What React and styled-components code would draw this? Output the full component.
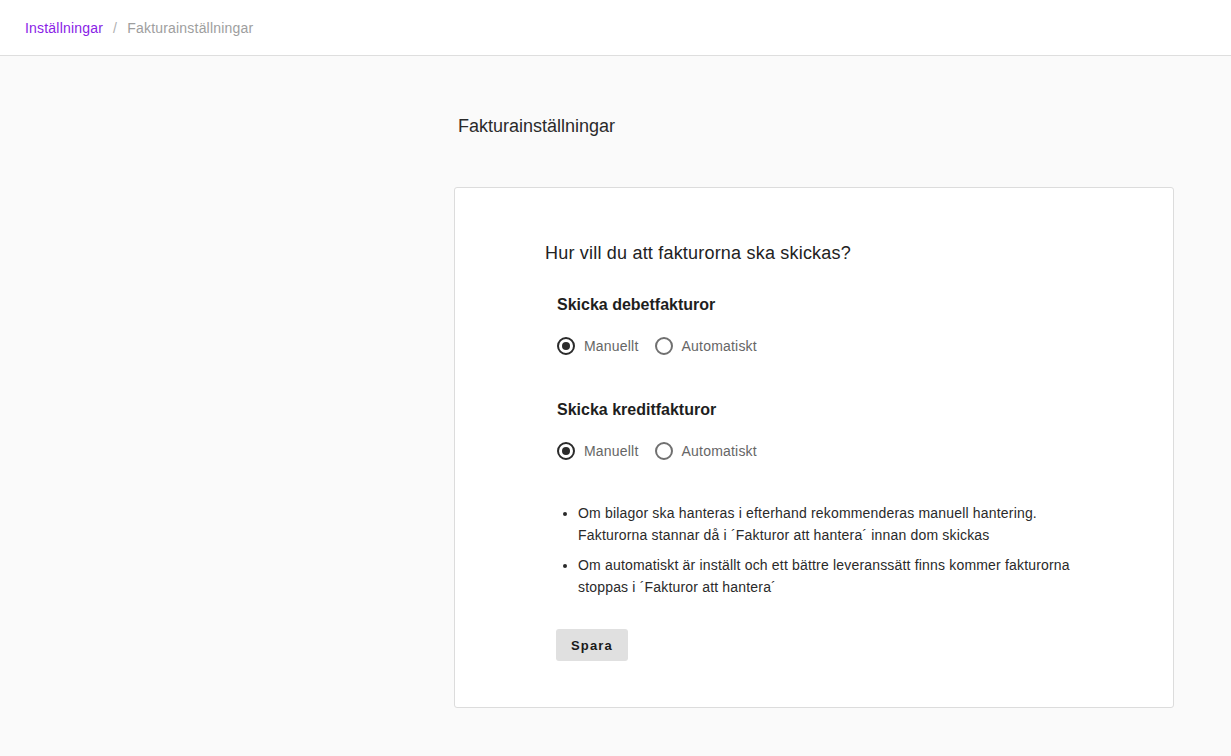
import React, { useState } from "react";
import styled, { createGlobalStyle } from "styled-components";

const GlobalStyle = createGlobalStyle`
  body {
    margin: 0;
    background: #fafafa;
    font-family: "Liberation Sans", Arial, sans-serif;
    color: #222;
  }
`;

const Header = styled.header`
  height: 55px;
  background: #fff;
  border-bottom: 1px solid #dedede;
  display: flex;
  align-items: center;
  padding: 0 25px;
  box-sizing: content-box;
  font-size: 14px;
  letter-spacing: 0.2px;
  gap: 10px;
`;

const Crumb = styled.a`
  color: ${props => (props.active ? "#8a22e6" : "#9e9e9e")};
  text-decoration: none;
  cursor: ${props => (props.active ? "pointer" : "default")};
`;

const Sep = styled.span`
  color: #b0b0b0;
`;

const Main = styled.main`
  display: grid;
  grid-template-columns: 454px 720px;
  padding-top: 59px;
  padding-bottom: 47px;
`;

const Column = styled.div`
  grid-column: 2;
  display: flex;
  flex-direction: column;
`;

const PageTitle = styled.h1`
  margin: 0 0 50px 4px;
  font-size: 18px;
  line-height: 22px;
  font-weight: normal;
  color: #2a2a2a;
`;

const Card = styled.section`
  background: #fff;
  border: 1px solid #dcdcdc;
  border-radius: 3px;
  padding: 54px 0 46px 90px;
`;

const Question = styled.h2`
  margin: 0 0 31px;
  font-size: 18px;
  line-height: 22px;
  font-weight: normal;
  letter-spacing: 0.2px;
  color: #222;
`;

const Body = styled.div`
  padding-left: 12px;
  display: flex;
  flex-direction: column;
`;

const Group = styled.div`
  margin-bottom: ${props => props.gap || "0"};
`;

const GroupTitle = styled.h3`
  margin: 0 0 20px;
  font-size: 16px;
  line-height: 20px;
  font-weight: bold;
  color: #1e1e1e;
`;

const RadioRow = styled.div`
  display: flex;
  align-items: center;
  gap: 16px;
  height: 22px;
`;

const RadioLabel = styled.label`
  display: flex;
  align-items: center;
  gap: 9px;
  font-size: 14px;
  letter-spacing: 0.2px;
  color: #666;
  cursor: pointer;
`;

const Circle = styled.span`
  width: 18px;
  height: 18px;
  box-sizing: border-box;
  border-radius: 50%;
  border: 2px solid ${props => (props.checked ? "#2b2b2b" : "#707070")};
  display: flex;
  align-items: center;
  justify-content: center;

  &::after {
    content: "";
    width: 8px;
    height: 8px;
    border-radius: 50%;
    background: ${props => (props.checked ? "#2b2b2b" : "transparent")};
  }
`;

const Notes = styled.ul`
  margin: 40px 0 31px;
  padding-left: 21px;
  width: 510px;
  font-size: 14px;
  line-height: 22px;
  letter-spacing: 0.18px;
  color: #2a2a2a;

  li + li {
    margin-top: 8px;
  }
`;

const SaveButton = styled.button`
  align-self: flex-start;
  margin-left: -1px;
  height: 32px;
  width: 72px;
  border: none;
  border-radius: 3px;
  background: #e0e0e0;
  font-family: "Liberation Sans", Arial, sans-serif;
  font-size: 13px;
  font-weight: bold;
  letter-spacing: 1.2px;
  color: #1a1a1a;
  cursor: pointer;
`;

const Radio = ({ checked, label, onClick }) => (
  <RadioLabel onClick={onClick}>
    <Circle checked={checked} />
    {label}
  </RadioLabel>
);

const RadioGroup = ({ value, onChange }) => (
  <RadioRow>
    <Radio checked={value === "manual"} label="Manuellt" onClick={() => onChange("manual")} />
    <Radio checked={value === "auto"} label="Automatiskt" onClick={() => onChange("auto")} />
  </RadioRow>
);

const App = () => {
  const [debit, setDebit] = useState("manual");
  const [credit, setCredit] = useState("manual");

  return (
    <>
      <GlobalStyle />
      <Header>
        <Crumb active>Inställningar</Crumb>
        <Sep>/</Sep>
        <Crumb>Fakturainställningar</Crumb>
      </Header>
      <Main>
        <Column>
          <PageTitle>Fakturainställningar</PageTitle>
          <Card>
            <Question>Hur vill du att fakturorna ska skickas?</Question>
            <Body>
              <Group gap="43px">
                <GroupTitle>Skicka debetfakturor</GroupTitle>
                <RadioGroup value={debit} onChange={setDebit} />
              </Group>
              <Group>
                <GroupTitle>Skicka kreditfakturor</GroupTitle>
                <RadioGroup value={credit} onChange={setCredit} />
              </Group>
              <Notes>
                <li>
                  Om bilagor ska hanteras i efterhand rekommenderas manuell hantering.
                  Fakturorna stannar då i ´Fakturor att hantera´ innan dom skickas
                </li>
                <li>
                  Om automatiskt är inställt och ett bättre leveranssätt finns kommer fakturorna
                  stoppas i ´Fakturor att hantera´
                </li>
              </Notes>
              <SaveButton>Spara</SaveButton>
            </Body>
          </Card>
        </Column>
      </Main>
    </>
  );
};

export default App;
